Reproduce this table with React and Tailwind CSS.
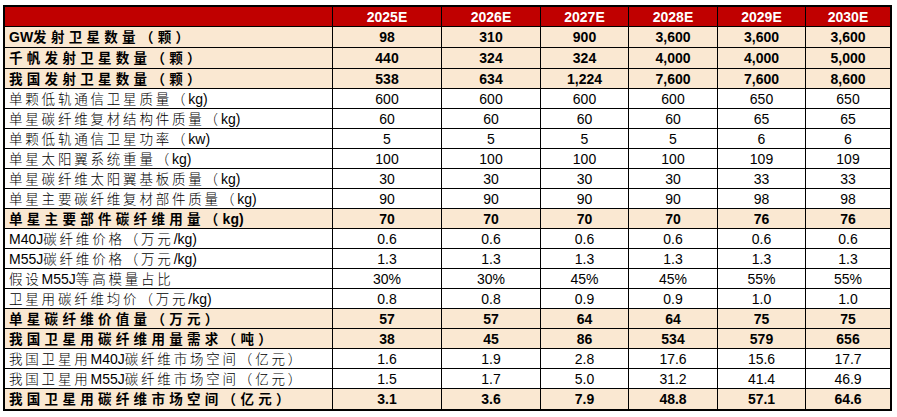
import React from "react";

const years = ["2025E", "2026E", "2027E", "2028E", "2029E", "2030E"];

const rows = [
  ["GW发射卫星数量（颗）", ["98", "310", "900", "3,600", "3,600", "3,600"], true],
  ["千帆发射卫星数量（颗）", ["440", "324", "324", "4,000", "4,000", "5,000"], true],
  ["我国发射卫星数量（颗）", ["538", "634", "1,224", "7,600", "7,600", "8,600"], true],
  ["单颗低轨通信卫星质量（kg)", ["600", "600", "600", "600", "650", "650"]],
  ["单星碳纤维复材结构件质量（kg)", ["60", "60", "60", "60", "65", "65"]],
  ["单颗低轨通信卫星功率（kw)", ["5", "5", "5", "5", "6", "6"]],
  ["单星太阳翼系统重量（kg)", ["100", "100", "100", "100", "109", "109"]],
  ["单星碳纤维太阳翼基板质量（kg)", ["30", "30", "30", "30", "33", "33"]],
  ["单星主要碳纤维复材部件质量（kg)", ["90", "90", "90", "90", "98", "98"]],
  ["单星主要部件碳纤维用量（kg)", ["70", "70", "70", "70", "76", "76"], true],
  ["M40J碳纤维价格（万元/kg)", ["0.6", "0.6", "0.6", "0.6", "0.6", "0.6"]],
  ["M55J碳纤维价格（万元/kg)", ["1.3", "1.3", "1.3", "1.3", "1.3", "1.3"]],
  ["假设M55J等高模量占比", ["30%", "30%", "45%", "45%", "55%", "55%"]],
  ["卫星用碳纤维均价（万元/kg)", ["0.8", "0.8", "0.9", "0.9", "1.0", "1.0"]],
  ["单星碳纤维价值量（万元）", ["57", "57", "64", "64", "75", "75"], true],
  ["我国卫星用碳纤维用量需求（吨）", ["38", "45", "86", "534", "579", "656"], true],
  ["我国卫星用M40J碳纤维市场空间（亿元）", ["1.6", "1.9", "2.8", "17.6", "15.6", "17.7"]],
  ["我国卫星用M55J碳纤维市场空间（亿元）", ["1.5", "1.7", "5.0", "31.2", "41.4", "46.9"]],
  ["我国卫星用碳纤维市场空间（亿元）", ["3.1", "3.6", "7.9", "48.8", "57.1", "64.6"], true],
];

const GRID = "grid grid-cols-[327px_109px_99px_88px_89px_88px_85px]";

function Label({ text, bold }) {
  const parts = text.split(/([A-Za-z0-9\/%)]+)/).filter(Boolean);
  return (
    <>
      {parts.map((p, i) =>
        /^[A-Za-z0-9\/%)]+$/.test(p) ? (
          <span key={i} className="font-['Liberation_Sans'] tracking-normal text-[14px]">
            {p}
          </span>
        ) : (
          <span
            key={i}
            className={`font-['Noto_Sans_CJK_SC'] text-[13.5px] ${
              bold ? "tracking-[4.3px]" : "tracking-[2.8px] font-light"
            }`}
          >
            {p}
          </span>
        )
      )}
    </>
  );
}

export default function App() {
  return (
    <div className="w-[897px] h-[417px] bg-white pl-[3px] pt-[5px] font-['Liberation_Sans','Noto_Sans_CJK_SC',sans-serif] text-black">
      <div className="w-[889px] border-2 border-black">
        <div className={`${GRID} h-[20px] bg-[#C00000] border-b border-black`}>
          <div />
          {years.map((y) => (
            <div
              key={y}
              className="border-l border-black flex items-center justify-center text-white font-bold text-[14px]"
            >
              {y}
            </div>
          ))}
        </div>
        {rows.map(([label, vals, bold], ri) => {
          const last = ri === rows.length - 1;
          const h = ri < 2 ? "h-[21px]" : "h-[20px]";
          return (
            <div
              key={ri}
              className={`${GRID} ${h} ${last ? "" : "border-b border-black"} ${
                bold ? "bg-[#FAE8D2] font-bold" : "bg-white font-normal"
              }`}
            >
              <div className="flex items-center pl-[4px] whitespace-nowrap overflow-hidden leading-none">
                <Label text={label} bold={bold} />
              </div>
              {vals.map((v, i) => (
                <div
                  key={i}
                  className="border-l border-black flex items-center justify-center text-[14px] leading-none"
                >
                  {v}
                </div>
              ))}
            </div>
          );
        })}
      </div>
    </div>
  );
}
